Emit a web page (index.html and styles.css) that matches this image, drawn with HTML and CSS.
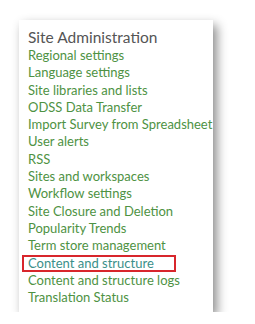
FILE: index.html
```html
<!DOCTYPE html>
<html lang="en">
<head>
    <meta charset="UTF-8">
    <title>Site Administration</title>
    <link rel="stylesheet" href="styles.css">
</head>
<body>
    <div class="panel">
        <h2>Site Administration</h2>
        <ul class="links">
            <li><a href="#">Regional settings</a></li>
            <li><a href="#">Language settings</a></li>
            <li><a href="#">Site libraries and lists</a></li>
            <li><a href="#">ODSS Data Transfer</a></li>
            <li><a href="#">Import Survey from Spreadsheet</a></li>
            <li><a href="#">User alerts</a></li>
            <li><a href="#">RSS</a></li>
            <li><a href="#">Sites and workspaces</a></li>
            <li><a href="#">Workflow settings</a></li>
            <li><a href="#">Site Closure and Deletion</a></li>
            <li><a href="#">Popularity Trends</a></li>
            <li><a href="#">Term store management</a></li>
            <li class="marked"><a href="#">Content and structure</a></li>
            <li><a href="#">Content and structure logs</a></li>
            <li><a href="#">Translation Status</a></li>
        </ul>
    </div>
</body>
</html>
```

FILE: styles.css
```css
/* base */
body, html {
    margin: 0;
    padding: 0;
    background: #fff;
    font-family: Lato, Arial, sans-serif;
}

/* panel */
.panel {
    margin: 20px 0 0 19px;
    width: 194px;
    height: 292px;
    box-sizing: border-box;
    padding: 7px 0 0 9px;
    background: #fff;
    overflow: hidden;
    box-shadow: 4px 5px 10px rgba(0, 0, 0, 0.45);
}

.panel h2 {
    margin: 0;
    font-size: 15.5px;
    font-weight: normal;
    line-height: 20px;
    color: #555;
    white-space: nowrap;
}

.links {
    list-style: none;
    margin: 0;
    padding: 0;
}

.links li {
    font-size: 13px;
    line-height: 17.3px;
    white-space: nowrap;
}

.links a {
    text-decoration: none;
    color: #4e9243;
}

.links .marked {
    margin-left: -6px;
    padding-left: 4px;
    width: 146px;
    border: 2px solid #d8262c;
    line-height: 13.3px;
}

.links .marked a {
    color: #3a8f8a;
}
```
